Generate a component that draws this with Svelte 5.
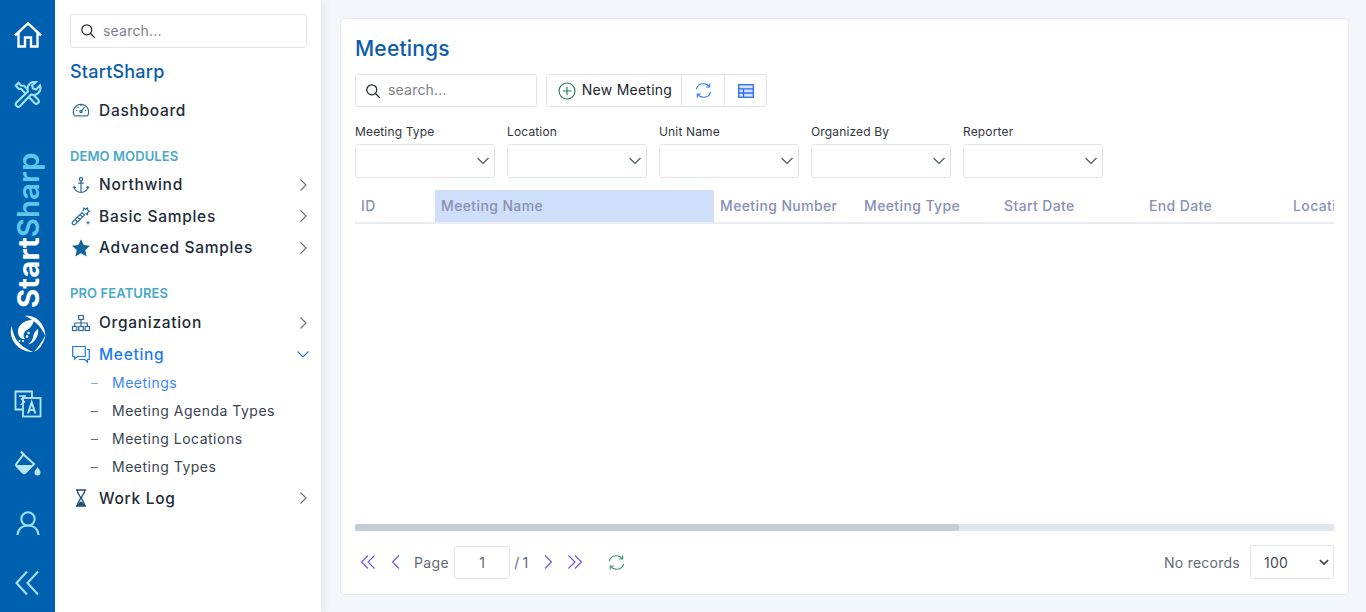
<script>
  const demo = [
    { label: 'Northwind', icon: 'anchor' },
    { label: 'Basic Samples', icon: 'wand' },
    { label: 'Advanced Samples', icon: 'star' }
  ];
  const filters = ['Meeting Type', 'Location', 'Unit Name', 'Organized By', 'Reporter'];
  const subItems = ['Meetings', 'Meeting Agenda Types', 'Meeting Locations', 'Meeting Types'];
  const columns = [
    { label: 'ID', width: 80 },
    { label: 'Meeting Name', width: 279, sorted: true },
    { label: 'Meeting Number', width: 144 },
    { label: 'Meeting Type', width: 140 },
    { label: 'Start Date', width: 145 },
    { label: 'End Date', width: 144 },
    { label: 'Location', width: 120 }
  ];
</script>

{#snippet chevron(open = false)}
  <svg class="chev" class:open viewBox="0 0 16 16" width="16" height="16" fill="none" stroke-width="1.100">
    {#if open}
      <path d="M2.500 5.500 8 11l5.500-5.500" stroke="#1f7ae0" />
    {:else}
      <path d="M5.500 2.500 11 8l-5.500 5.500" stroke="#6b6a70" />
    {/if}
  </svg>
{/snippet}

{#snippet navIcon(name)}
  <svg class="nav-icon" viewBox="0 0 20 20" width="20" height="20" fill="none" stroke="#2b6b9c" stroke-width="1.200">
    {#if name === 'gauge'}
      <path d="M3.300 15.500A7.600 7.600 0 1 1 16.700 15.500Z" /><path d="M10 11.500 13.500 7M5 10.500h1.300M6.500 7l1 .8M10 5v1.300M14 10.500h1.300" /><circle cx="10" cy="11.500" r="1.200" /><path d="M3 16.200h14" stroke="#9db8d2" stroke-width="1.600" />
    {:else if name === 'anchor'}
      <circle cx="10" cy="4.300" r="1.600" /><path d="M10 6v11.500M7.200 8.200h5.600M3 11.500c.3 3.500 3.300 6 7 6s6.700-2.500 7-6M3 11.500l-1 1.800M3 11.500l1.800 1.200M17 11.500l1 1.800M17 11.500l-1.800 1.200" />
    {:else if name === 'wand'}
      <path d="m1.500 16 9.500-9.500 2.500 2.500L4 18.500a1.800 1.800 0 0 1-2.500-2.500ZM4 13.500l2.500 2.500M6.500 11 9 13.500M9 8.500l2.500 2.500" /><path d="m12 5 1-3 1.500 1.200L16.500 2l.3 2.200 1.700 1.300-2 1 -.2 2.200-1.800-1.200" /><path d="M17 15v3.500M15.300 16.700h3.400" stroke-width="1" />
    {:else if name === 'star'}
      <path d="m10 1.200 2.700 5.900 6.300.7-4.700 4.300 1.300 6.300L10 15.300l-5.600 3.100 1.300-6.300L1 7.800l6.300-.7Z" fill="#10659c" stroke="none" />
    {:else if name === 'org'}
      <rect x="7.700" y="2.500" width="4.600" height="4" /><rect x="1.500" y="13.500" width="4.400" height="4" /><rect x="7.800" y="13.500" width="4.400" height="4" /><rect x="14.100" y="13.500" width="4.400" height="4" /><path d="M10 6.500v7M3.700 13.500V10h12.600v3.500" />
    {:else if name === 'chat'}
      <g stroke="#1f7ae0"><path d="M1.700 2.500h12.600v10H6.500l-2.800 2.700v-2.700h-2Z" /><path d="M16 5.500h2.300v10h-1.800v2.700l-2.700-2.700H8" /></g>
    {:else if name === 'hourglass'}
      <path d="M5 2h10M5 18h10M6.200 2c0 4.500 3.300 5.500 3.300 8s-3.300 3.500-3.300 8M13.800 2c0 4.500-3.300 5.500-3.300 8s3.300 3.500 3.300 8" stroke="#1c4f76" stroke-width="1.300" /><path d="M6.500 18c.5-3 2.500-4.500 3.500-4.500s3 1.500 3.500 4.500Z" fill="#1c4f76" stroke="none" />
    {/if}
  </svg>
{/snippet}

{#snippet search()}
  <svg class="search-icon" viewBox="0 0 16 16" width="16" height="16" fill="none" stroke="#20262e" stroke-width="1.200">
    <circle cx="6.800" cy="6.800" r="5" /><path d="m10.500 10.500 4.300 4.300" />
  </svg>
{/snippet}

{#snippet dropArrow()}
  <svg viewBox="0 0 14 8" width="14" height="8" fill="none" stroke="#4a5564" stroke-width="1.100"><path d="m1.500 1 5.500 5.500L12.500 1" /></svg>
{/snippet}

<div class="app">
  <aside class="rail">
    <svg class="rail-icon top" viewBox="0 0 28 28" width="28" height="28" fill="none" stroke="#fff" stroke-width="2.400">
      <path d="M1 14.500 14 2.300l13 12.200" /><path d="M4.500 11.500V25.500h6.500v-9h6v9h6.500V11.500" />
    </svg>
    <svg class="rail-icon tools" viewBox="0 0 28 28" width="28" height="28" fill="none" stroke="#9fe3f8" stroke-width="2.100">
      <path d="M4.500 1.800 1.700 4.500l3 3.500 2.300-.2 13.500 14.200a2.400 2.400 0 0 0 3.600-3.400L10 4.800 7 4.500Z" />
      <path d="M26 4.500l-4 4-3-1-1-3 4-3.500a7 7 0 0 0-8 9.500L2.500 21.500a2.500 2.500 0 0 0 3.700 3.500L17 13.500a7 7 0 0 0 9-9Z" fill="#0060b0" />
    </svg>
    <div class="brand"><span class="start">Start</span><span class="sharp">Sharp</span></div>
    <svg class="logo" viewBox="0 0 36 38" width="36" height="38" fill="#fff">
      <path d="M15 1C25-1 35 8 35.500 21 31 11 24 5 15 1Z" />
      <path d="M1.500 11C-2 24 8 37 23 37 14 33 7 28 4 20 3 17 2 14 1.500 11Z" />
      <path d="M35.500 20C34 28 30 34 24 37 28 32 32 27 35.500 20Z" />
      <path d="M24 5C15 4 7 10 8 18c.5 4 3.500 6.500 7 6-2.500-3-1.500-7 2-9 3-1.700 6-5 7-10Z" />
      <path d="M28 14c1 7-3 14-10 15.500 3-2 5-5 5.500-9 .3-2.500 2-5 4.500-6.500Z" />
      <circle cx="18.500" cy="18" r="1.300" /><circle cx="17" cy="21.500" r="1.300" /><circle cx="13" cy="26" r="1.100" /><circle cx="9.500" cy="26" r="1" />
    </svg>
    <svg class="rail-icon lang" viewBox="0 0 28 28" width="28" height="28" fill="none" stroke="#b5e6f7" stroke-width="1.800">
      <path d="M9 19.500H1.500V1.500H18V8" /><rect x="9" y="8" width="17.500" height="18.500" fill="#0060b0" />
      <path d="M5 6h7M10.500 6l-3 3 3 3-4 3" stroke-width="1.500" /><path d="m14 23.500 3.700-11 3.700 11M15 20h5.500" stroke-width="2" />
    </svg>
    <svg class="rail-icon paint" viewBox="0 0 28 28" width="28" height="28" fill="none" stroke="#b5e6f7" stroke-width="2">
      <path d="M7 1.500 10 5" /><path d="M9.500 4.500 20 14l-8.500 8.500a2 2 0 0 1-2.800 0L2.500 16a2 2 0 0 1 0-2.500Z" />
      <path d="M2.500 15H19l-7.500 7.500a2 2 0 0 1-2.800 0Z" fill="#b5e6f7" stroke="none" /><path d="M23.500 17c2 3 3 4 3 5.500a3 3 0 0 1-6 0c0-1.500 1-2.500 3-5.500Z" fill="#b5e6f7" stroke="none" />
    </svg>
    <svg class="rail-icon user" viewBox="0 0 28 28" width="28" height="28" fill="none" stroke="#9fe0f7" stroke-width="2.100">
      <circle cx="14" cy="9" r="6.700" /><path d="M3.500 25c.5-6 4.500-9.500 10.500-9.500S24 19 24.500 25" />
    </svg>
    <svg class="rail-icon collapse" viewBox="0 0 28 28" width="28" height="28" fill="none" stroke="#9fe0f7" stroke-width="2.100">
      <path d="M13 2.500 2.500 14 13 25.500M24 2.500 13.500 14 24 25.500" />
    </svg>
  </aside>

  <nav class="sidebar">
    <div class="side-search">
      {@render search()}
      <span class="placeholder">search...</span>
    </div>
    <div class="side-title">StartSharp</div>
    <div class="item dash">{@render navIcon('gauge')}<span>Dashboard</span></div>

    <div class="section">DEMO MODULES</div>
    {#each demo as d}
      <div class="item">{@render navIcon(d.icon)}<span>{d.label}</span>{@render chevron()}</div>
    {/each}

    <div class="section pro">PRO FEATURES</div>
    <div class="item">{@render navIcon('org')}<span>Organization</span>{@render chevron()}</div>
    <div class="item active">{@render navIcon('chat')}<span>Meeting</span>{@render chevron(true)}</div>
    <ul class="sub">
      {#each subItems as s, i}
        <li class:current={i === 0}><i></i>{s}</li>
      {/each}
    </ul>
    <div class="item">{@render navIcon('hourglass')}<span>Work Log</span>{@render chevron()}</div>
  </nav>

  <main class="content">
    <section class="card">
      <h1>Meetings</h1>
      <div class="toolbar">
        <div class="quick-search">
          {@render search()}
          <span class="placeholder">search...</span>
        </div>
        <div class="btn-group">
          <button class="add">
            <svg viewBox="0 0 18 18" width="18" height="18" fill="none" stroke="#1d7a55" stroke-width="1.100"><circle cx="9" cy="9" r="8" /><path d="M9 4.800v8.400M4.800 9h8.400" /></svg>
            <span>New Meeting</span>
          </button>
          <button class="icon-btn">
            <svg viewBox="0 0 18 18" width="17" height="17" fill="none" stroke="#2f7bf0" stroke-width="1.200"><path d="M1.500 7.500C2.300 4 5.300 1.800 9 1.800c2.700 0 4.800 1.200 6 3.200M16.500 10.500c-.8 3.500-3.800 5.700-7.500 5.700-2.700 0-4.800-1.200-6-3.200" /><path d="M15.600 1.500v3.800h-3.800M2.400 16.500v-3.800h3.800" /></svg>
          </button>
          <button class="icon-btn">
            <svg viewBox="0 0 16 14" width="16" height="14" fill="#d3e2ff" stroke="#2f6bf0" stroke-width="1.300"><rect x=".7" y=".7" width="14.600" height="12.600" /><path d="M.7 4.800h14.600M.7 9h14.600M5.500 4.800v8.500" fill="none" /></svg>
          </button>
        </div>
      </div>

      <div class="filters">
        {#each filters as f}
          <div class="filter">
            <label for={f}>{f}</label>
            <div class="select" id={f}>{@render dropArrow()}</div>
          </div>
        {/each}
      </div>

      <div class="grid">
        <div class="grid-head">
          {#each columns as c}
            <div class="col" class:sorted={c.sorted} style:width="{c.width}px">{c.label}</div>
          {/each}
        </div>
        <div class="grid-body"></div>
        <div class="scrollbar"><div class="thumb"></div></div>
      </div>

      <div class="pager">
        <svg class="pg first" viewBox="0 0 16 16" width="16" height="16"><path d="M8 1.500 1.500 8 8 14.500M14.500 1.500 8 8l6.500 6.500" /></svg>
        <svg class="pg prev" viewBox="0 0 16 16" width="16" height="16"><path d="M11 1.500 4.500 8l6.500 6.500" /></svg>
        <span class="page-label">Page</span>
        <div class="page-box">1</div>
        <span class="page-total">/ 1</span>
        <svg class="pg next" viewBox="0 0 16 16" width="16" height="16"><path d="M5 1.500 11.500 8 5 14.500" /></svg>
        <svg class="pg last" viewBox="0 0 16 16" width="16" height="16"><path d="M1.500 1.500 8 8l-6.500 6.500M8 1.500 14.500 8 8 14.500" /></svg>
        <svg class="reload" viewBox="0 0 18 18" width="17" height="17" fill="none" stroke="#3d9171" stroke-width="1.200"><path d="M1.500 7.500C2.300 4 5.300 1.800 9 1.800c2.700 0 4.800 1.200 6 3.200M16.500 10.500c-.8 3.500-3.800 5.700-7.500 5.700-2.700 0-4.800-1.200-6-3.200" /><path d="M15.600 1.500v3.800h-3.800M2.400 16.500v-3.800h3.800" /></svg>
        <span class="records">No records</span>
        <div class="page-size">
          <span>100</span>
          <svg viewBox="0 0 12 8" width="10" height="7" fill="none" stroke="#444" stroke-width="2"><path d="m1 1 5 5 5-5" /></svg>
        </div>
      </div>
    </section>
  </main>
</div>

<style>
  :global(body) { font-family: Inter, "Liberation Sans", sans-serif; background: #f3f6fa; color: #2a3442; }
  .app { display: flex; height: 612px; overflow: hidden; }

  .rail { width: 55px; flex: none; background: #0060b0; display: flex; flex-direction: column; align-items: center; }
  .rail-icon { flex: none; }
  .top { margin-top: 21px; }
  .tools { margin-top: 32px; }
  .brand { margin-top: 36px; height: 163px; writing-mode: vertical-rl; transform: rotate(180deg); font-size: 29.500px; font-weight: 700; line-height: 30px; text-align: left; white-space: nowrap; flex: none; }
  .start { color: #fff; }
  .sharp { color: #5cc8ec; font-weight: 600; }
  .logo { margin-top: 7px; flex: none; }
  .lang { margin-top: 37px; }
  .paint { margin-top: 32px; }
  .user { margin-top: 32px; }
  .collapse { margin-top: 31px; }

  .sidebar { width: 266px; flex: none; background: #fff; box-shadow: 2px 0 8px rgba(60, 80, 120, .1); padding: 14px 14px 0 15px; box-sizing: border-box; z-index: 1; }
  .side-search { height: 34px; border: 1px solid #e4e5e7; border-radius: 3px; display: flex; align-items: center; padding-left: 9px; gap: 7px; box-sizing: border-box; }
  .placeholder { color: #7c8187; font-size: 14px; letter-spacing: .2px; margin-bottom: 2px; }
  .side-title { margin-top: 12px; height: 24px; line-height: 24px; font-size: 18px; font-weight: 500; color: #0b5cad; letter-spacing: .2px; }
  .item { display: flex; align-items: center; height: 31.500px; font-size: 15.500px; font-weight: 450; letter-spacing: .7px; color: #222a36; }
  .item > span { margin-left: 8px; flex: 1; }
  .item.dash { margin-top: 11px; height: 30px; }
  .nav-icon { flex: none; margin-left: 1px; }
  .chev { flex: none; margin-right: -4px; }
  .item.active { color: #1a7af0; }
  .section { margin-top: 22px; height: 18px; line-height: 18px; font-size: 13px; font-weight: 600; color: #4aa8c4; margin-bottom: 4px; letter-spacing: .1px; }
  .section.pro { margin-top: 20.500px; margin-bottom: 5px; }
  .sub { list-style: none; margin: -1px 0 1.250px; padding: 0 0 0 21px; }
  .sub li { height: 28px; line-height: 28px; font-size: 14px; letter-spacing: .5px; display: flex; align-items: center; color: #3a4350; }
  .sub li i { width: 7px; height: 1px; background: #5d6b7c; margin-right: 14px; }
  .sub li.current { color: #3b86f6; }
  .sub li.current i { background: #7fb0ee; }

  .content { flex: 1; padding: 18px 17px 17px 19px; box-sizing: border-box; min-width: 0; }
  .card { height: 577px; background: #fff; border: 1px solid #e7e9ed; border-radius: 4px; padding: 0 14px; box-sizing: border-box; display: flex; flex-direction: column; }
  h1 { margin: 17px 0 0; height: 26px; line-height: 26px; font-size: 21px; font-weight: 500; color: #0b5cad; letter-spacing: .2px; }
  .toolbar { display: flex; margin-top: 12px; gap: 9px; }
  .quick-search { width: 182px; height: 33px; border: 1px solid #e4e5e7; border-radius: 3px; display: flex; align-items: center; gap: 7px; padding-left: 9px; box-sizing: border-box; }
  .btn-group { display: flex; height: 33px; border: 1px solid #e4e5e7; border-radius: 3px; box-sizing: border-box; }
  button { background: none; border: 0; padding: 0; font: inherit; display: flex; align-items: center; justify-content: center; }
  .add { width: 135px; gap: 6px; padding-left: 2px; box-sizing: border-box; font-size: 14px; letter-spacing: .25px; color: #20262e; border-right: 1px solid #e4e5e7; }
  .add span { margin-bottom: 2px; }
  .icon-btn { width: 42px; }
  .icon-btn:last-child { width: 42px; border-left: 1px solid #e4e5e7; }

  .filters { display: flex; gap: 12px; margin-top: 17px; }
  .filter { width: 140px; display: flex; flex-direction: column; }
  label { height: 15px; line-height: 15px; font-size: 12px; letter-spacing: .15px; color: #30363e; }
  .select { margin-top: 5px; height: 34px; border: 1px solid #e4e5e7; border-radius: 3px; box-sizing: border-box; display: flex; align-items: center; justify-content: flex-end; padding-right: 4px; }

  .grid { margin-top: 12px; flex: 1; display: flex; flex-direction: column; min-height: 0; overflow: hidden; }
  .grid-head { display: flex; height: 34px; flex: none; border-bottom: 2px solid #e9ecf0; box-sizing: border-box; overflow: hidden; }
  .col { flex: none; padding-left: 6px; box-sizing: border-box; line-height: 32px; font-size: 14px; font-weight: 500; color: #8a90b6; white-space: nowrap; letter-spacing: .38px; }
  .col.sorted { background: #cfdef9; }
  .grid-body { flex: 1; }
  .scrollbar { height: 7px; flex: none; background: #e2e6ee; }
  .thumb { width: 604px; height: 100%; background: #c6cdd8; border-radius: 2px; }

  .pager { height: 63px; flex: none; display: flex; align-items: center; padding-bottom: 1px; box-sizing: border-box; font-size: 14px; color: #5f6975; letter-spacing: .2px; }
  .pg { fill: none; stroke: #6a4df5; stroke-width: 1.100; flex: none; }
  .first { margin-left: 5px; }
  .prev { margin-left: 12px; }
  .page-label { margin-left: 10px; letter-spacing: .4px; }
  .page-box { width: 56px; height: 33px; margin-left: 5px; border: 1px solid #e4e5e7; border-radius: 3px; box-sizing: border-box; text-align: center; line-height: 31px; }
  .page-total { margin-left: 4px; letter-spacing: -.3px; }
  .next { margin-left: 12px; }
  .last { margin-left: 11px; }
  .reload { margin-left: 25px; flex: none; }
  .records { margin-left: auto; letter-spacing: .25px; }
  .page-size { width: 84px; height: 34px; margin-left: 10px; border: 1px solid #e4e5e7; border-radius: 3px; box-sizing: border-box; display: flex; align-items: center; justify-content: space-between; padding: 0 4px 0 13px; color: #444b55; }
</style>
